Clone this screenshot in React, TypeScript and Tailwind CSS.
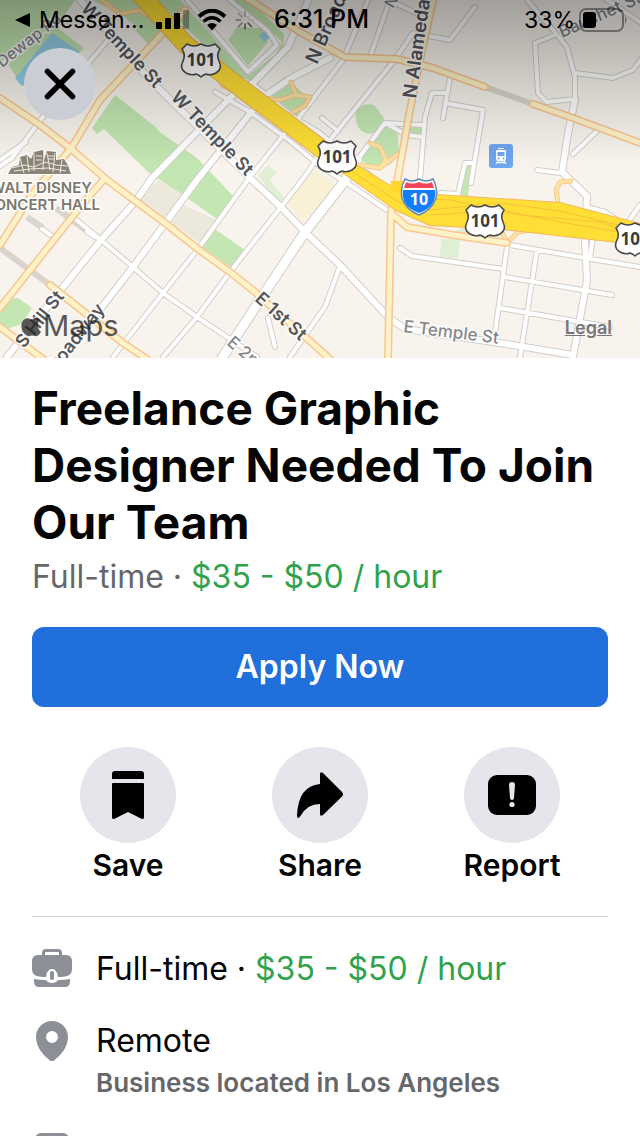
import React from 'react';

const parks = [
  'M0 0H75L60 22L20 48L0 62Z',
  'M8 64L55 26L84 48L70 62L22 86Z',
  'M92 0H150L160 30L148 36L118 12Z',
  'M135 30L152 20L163 34L150 46Z',
  'M157 0H180L248 76L276 54L282 42L262 22L232 0H250L284 34L283 52L254 82L228 72L205 46Z',
  'M228 40L237 27L262 28L268 42L248 66Z',
  'M268 92L284 77L312 100L297 117Z',
  'M115 95L157 128L158 131L197 158L235 198L217 219L190 200L148 172L104 129L97 134L92 128Z',
  'M213 228L245 250L232 268L202 247Z',
  'M0 312L10 299L18 298L32 308L22 324L0 331Z',
  'M356 112Q362 102 374 105L384 118Q380 132 370 134Q354 132 356 112Z',
  'M374 136L386 126L398 134L399 155L390 165L370 167L360 159L368 148Z',
  'M410 127L422 128V136L408 134Z',
  'M465 165L471 165L468 197L459 195Z',
];

const lightParks = [
  'M258 175L268 165L277 172L270 180L284 198L278 203Z',
  'M442 239H460L458 258H439Z',
  'M446 236L465 227L500 237L494 243Z',
];

const blocks = [
  'M158 180L190 198L165 218L140 200Z',
  'M183 205L217 220L200 243L172 223Z',
];

const tunnels = [
  'M0 248L50 285',
  'M27 217L43 228',
  'M56 208L87 231',
  'M485 87L533 104',
];

const streets = [
  // downtown grid
  'M257 357L227 337L197 317L163 293L133 267L101 240L73 217',
  'M87 232L101 240',
  'M42 229L52 236',
  'M285 133L250 177L198 249L163 293L113 357',
  'M320 155L302 180L281 207L230 272L197 317L163 357',
  'M268 318L275 347',
  'M340 266L325 307L290 357',
  'M0 166L12 158L42 118L108 40',
  'M0 160L26 142',
  // along the freeway
  'M215 92L250 112L290 141L320 166L350 185L390 212',
  'M253 84L293 117L320 133L360 168L384 186',
  'M187 0L248 72L277 45L268 31L230 0',
  // north side
  'M368 0L343 60L320 90L297 120',
  'M390 0L370 57',
  'M393 2L418 14',
  'M475 7L450 40L413 33L393 62L330 140L316 156',
  'M322 118L338 131',
  'M423 125L385 123L357 160',
  'M385 123L407 135L422 137',
  'M447 93H432L425 117L420 180',
  'M450 78L443 118',
  'M445 103L483 110L471 183',
  'M472 163H465L458 194L440 193',
  'M555 35L535 43L538 93L547 102L575 99',
  'M575 73L613 78L633 70L650 48',
  'M607 0L640 22',
  'M597 131L573 154',
  'M537 170L560 173',
  'M527 0L553 30L567 47L575 77V100',
  // arts district
  'M400 248L412 256L503 269',
  'M510 245L585 258L640 267',
  'M507 247L495 333',
  'M537 250L520 357',
  'M505 277L612 295',
  'M500 308L610 327',
  'M590 208L605 212L620 222',
  'M593 237L590 258',
  'M640 205L628 222',
];

const avenues = [
  'M80 0L150 80L250 178L281 207L305 232L340 265L388 317L405 329L500 343L573 355',
  'M310 -4L288 47L254 82L233 95L152 178L135 202L101 240L7 357',
  'M330 58L293 77L262 98L253 110L197 180L133 267L63 357',
  'M575 100L568 133L562 172L587 196L585 240L587 280L573 357',
];

const yellowRoads = [
  'M0 98L40 125L70 148L107 180L165 223L198 249L230 272L255 292L330 359',
  'M0 245L32 194L72 147L100 100L163 33L185 10',
  'M105 178L80 207L0 308',
  'M50 285L123 343L147 359',
  'M0 327L43 359',
  'M242 -5L300 32L345 57L397 59L433 68L485 87',
  'M533 104L573 118L640 143',
  'M434 -4L420 60L410 110L398 177L391 213L388 359',
  'M391 213L407 227L453 235L507 243',
];

const ramps = [
  'M262 98L280 100L296 95L291 82',
  'M296 95L310 97L305 106L293 112',
  'M360 165L380 168L386 160L380 147L370 143',
  'M380 168L390 160L398 154',
  'M102 0L120 14L140 10L160 24',
  'M240 85L232 90L222 85',
  'M507 243L503 234',
  'M507 243L518 232L530 230',
  'M558 203L556 190L560 182L571 181',
];

const mapLabels = [
  { text: 'W Temple St', x: 80, y: 9, angle: 47, size: 18, bold: true },
  { text: 'W Temple St', x: 170, y: 98, angle: 46, size: 18, bold: true },
  { text: 'Dewap Rd', x: 2, y: 68, angle: -38, size: 16, bold: false },
  { text: 'N Broadway', x: 317, y: 65, angle: -66, size: 19, bold: true },
  { text: 'N Alameda St', x: 416, y: 99, angle: -82, size: 19, bold: true },
  { text: 'N Main', x: 393, y: 9, angle: -60, size: 15, bold: false },
  { text: 'Bauchet St', x: 562, y: 38, angle: -24, size: 17, bold: false },
  { text: 'E 1st St', x: 254, y: 300, angle: 42, size: 18, bold: true },
  { text: 'E 2nd St', x: 226, y: 344, angle: 40, size: 17, bold: false },
  { text: 'E Temple St', x: 403, y: 332, angle: 7, size: 17, bold: false },
  { text: 'S Hill St', x: 24, y: 349, angle: -52, size: 18, bold: true },
  { text: 'Broadway', x: 52, y: 378, angle: -52, size: 18, bold: true },
];

const routeShields = [
  { x: 201, y: 60 },
  { x: 337, y: 157 },
  { x: 485, y: 221 },
  { x: 635, y: 239 },
];

const concertHall =
  'M8 174L12 167L19 165L20 157L27 155L31 159L34 152L43 150L44 160L47 151L56 152L56 160L64 159L68 165L71 174Z';

const freeway =
  'M334 146L356 165L400 192L437 195L560 203L640 224V246L617 242L503 229L430 225L396 210L345 174L318 154Z';

const MapView = () => (
  <svg className="block w-full" viewBox="0 0 640 358" role="img" aria-label="Map of Los Angeles">
    <defs>
      <linearGradient id="statusShade" x1="0" y1="0" x2="0" y2="1">
        <stop offset="0" stopColor="#000" stopOpacity="0.35" />
        <stop offset="0.5" stopColor="#000" stopOpacity="0.16" />
        <stop offset="1" stopColor="#000" stopOpacity="0" />
      </linearGradient>
    </defs>
    <rect width="640" height="358" fill="#f8f4ed" />

    {/* Land use */}
    <path d={parks.join('')} fill="#c3e6b2" />
    <path d={lightParks.join('')} fill="#deefd3" />
    <path d={blocks.join('')} fill="#ece8dc" />
    <path d="M314 170L339 187L302 222L286 200Z" fill="#faf0d6" />
    <path d="M52 33L80 52L22 86L15 78Z" fill="#94cfe6" />
    <path d="M259 35L266 31L270 38L264 42Z" fill="#94cfe6" />

    {/* Roads: casing first, then the fill */}
    <g fill="none" strokeLinecap="round" strokeLinejoin="round">
      <path d={tunnels.join('')} stroke="#d9d5cc" strokeWidth="6" strokeLinecap="butt" />
      <path d={streets.join('')} stroke="#d2cec9" strokeWidth="6" />
      <path d={avenues.join('')} stroke="#d2cec9" strokeWidth="8" />
      <path d="M357 160L344 182L305 232L260 300L222 358" stroke="#d2cec9" strokeWidth="11" />
      <path d={streets.join('')} stroke="#fff" strokeWidth="4" />
      <path d={avenues.join('')} stroke="#fff" strokeWidth="6" />
      <path d="M357 160L344 182L305 232L260 300L222 358" stroke="#fff" strokeWidth="9" />
      <path d={ramps.join('')} stroke="#f9c98c" strokeWidth="5" />
      <path d={ramps.join('')} stroke="#fde3a4" strokeWidth="3" />
      <path d={yellowRoads.join('')} stroke="#fac591" strokeWidth="8" />
      <path d={yellowRoads.join('')} stroke="#fef3c8" strokeWidth="5" />
      <path d="M140 -6L185 44L234 83L290 125L340 163" stroke="#edb258" strokeWidth="19" />
      <path d={freeway} stroke="#f3b95c" strokeWidth="2" />
      <path d="M140 -6L185 44L234 83L290 125L340 163" stroke="#ffdf35" strokeWidth="17" />
    </g>
    <path d={freeway} fill="#ffdf35" />
    <path d="M391 181L405 181L410 196L390 190Z" fill="#ffd52e" />
    <g fill="none" stroke="#f6c13b" strokeWidth="1">
      <path d="M350 170L398 202L430 210L500 203L560 211L640 230" />
      <path d="M400 198L450 200L520 215L600 222L640 236" />
      <path d="M430 215L500 210L560 222L620 232" />
    </g>

    {/* Street names */}
    {mapLabels.map(({ text, x, y, angle, size, bold }, index) => (
      <text
        key={index}
        transform={`translate(${x} ${y}) rotate(${angle})`}
        fontSize={size}
        fontWeight={bold ? 600 : 500}
        fill={bold ? '#55565a' : '#85868a'}
        stroke="#fff"
        strokeOpacity="0.8"
        strokeWidth="3"
        strokeLinejoin="round"
        paintOrder="stroke"
      >
        {text}
      </text>
    ))}

    {/* Concert hall */}
    <path d={concertHall} fill="#8b8577" stroke="#fff" strokeWidth="2" paintOrder="stroke" />
    <path
      d="M20 158L24 173M27 156L29 172M34 153V171M44 152L43 170M47 153L50 170M55 153L53 172M62 160L60 173M12 168L24 165L34 167L45 162L56 165L68 166M14 171L30 169L48 168L66 171M36 156H42M48 156H54M36 160H42M48 159H54"
      fill="none"
      stroke="#efece4"
      strokeWidth="1"
    />
    <g
      fontSize="15"
      fontWeight="600"
      fill="#7c776b"
      stroke="#fff"
      strokeWidth="3"
      strokeLinejoin="round"
      paintOrder="stroke"
      textAnchor="end"
    >
      <text x="92" y="193">WALT DISNEY</text>
      <text x="100" y="210">CONCERT HALL</text>
    </g>

    {/* Route shields */}
    {routeShields.map(({ x, y }) => (
      <g key={x} transform={`translate(${x} ${y})`}>
        <path
          d="M-14 -16Q-7 -12 0 -16Q7 -12 14 -16L19 -11Q15 -5 18 1Q22 9 15 13Q9 16 5 14Q2 15 0 17Q-2 15 -5 14Q-9 16 -15 13Q-22 9 -18 1Q-15 -5 -19 -11Z"
          fill="#fff"
          stroke="#4a4a4a"
          strokeWidth="1.6"
          strokeLinejoin="round"
        />
        <text y="6" textAnchor="middle" fontSize="17" fontWeight="700" fill="#3d3d3d" fontFamily="Open Sans">
          101
        </text>
      </g>
    ))}
    <g transform="translate(419 197)">
      <path
        d="M-14 -18Q-7 -14 0 -18Q7 -14 14 -18Q19 -9 17 1Q13 13 0 18Q-13 13 -17 1Q-19 -9 -14 -18Z"
        fill="#fff"
        stroke="#5f88b5"
        strokeWidth="1.5"
      />
      <path d="M-13 -15Q-7 -12 0 -15Q7 -12 13 -15L15 -9H-15Z" fill="#f5455c" />
      <path d="M-16 -7H16Q18 10 0 16Q-18 10 -16 -7Z" fill="#137cf8" />
      <text y="8" textAnchor="middle" fontSize="16" fontWeight="700" fill="#fff" fontFamily="Open Sans">
        10
      </text>
    </g>

    {/* Train station */}
    <g transform="translate(489 144)">
      <rect width="24" height="24" rx="3" fill="#6ea5ef" />
      <path d="M9 4H15V5H9ZM8 6H16Q17 6 17 7V15Q17 17 15 17H9Q7 17 7 15V7Q7 6 8 6Z" fill="#fff" />
      <path d="M8.500 8H15.500V12H8.500Z" fill="#6ea5ef" />
      <circle cx="9.500" cy="14.500" r="1" fill="#6ea5ef" />
      <circle cx="14.500" cy="14.500" r="1" fill="#6ea5ef" />
      <path d="M9 17L7 20M15 17L17 20M8 18.500H16" stroke="#fff" strokeWidth="1.300" />
    </g>

    <rect width="640" height="165" fill="url(#statusShade)" />

    {/* Attribution */}
    <g opacity="0.75">
      <path
        d="M32 320C34 317 38 317 40 320Q37 323 38 327Q39 331 41 332Q38 337 35 336Q32 335 29 336Q25 336 22 330Q20 322 25 319Q28 317 32 320Z"
        fill="#222"
      />
      <text x="43" y="336" fontSize="29" fill="#222">
        Maps
      </text>
    </g>
  </svg>
);

const StatusBar = () => (
  <div className="absolute inset-x-0 top-0 grid h-10 grid-cols-[1fr_auto_1fr] items-center pl-[15px] pr-3 text-[23px] text-black">
    <div className="flex items-center">
      <svg className="mr-2 h-4 w-4" viewBox="0 0 16 16" aria-hidden="true">
        <path d="M0 8L15 1V15Z" />
      </svg>
      <span>Messen...</span>
      <svg className="ml-3 h-5 w-[33px]" viewBox="0 0 33 20" aria-hidden="true">
        <rect x="0" y="12" width="6" height="7" rx="1" />
        <rect x="9" y="8" width="6" height="11" rx="1" />
        <rect x="18" y="3" width="6" height="16" rx="1" />
        <rect x="27" y="0" width="6" height="19" rx="1" opacity="0.3" />
      </svg>
      <svg className="ml-2 h-[22px] w-[30px]" viewBox="0 0 30 22" fill="none" aria-hidden="true">
        <path d="M2 7.500Q15 -4 28 7.500" stroke="#000" strokeWidth="4" />
        <path d="M6.500 12.500Q15 5 23.500 12.500" stroke="#000" strokeWidth="3.500" />
        <path d="M10 16Q15 12 20 16L15 21.500Z" fill="#000" />
      </svg>
      <svg className="ml-2 h-5 w-5" viewBox="0 0 20 20" fill="none" strokeWidth="1.5" strokeLinecap="round" aria-hidden="true">
        <path d="M10 1V6" stroke="#777" />
        <path d="M16.500 3.500L13 7M14.500 10H19" stroke="#999" />
        <path d="M13 13L16.500 16.500M10 14V19" stroke="#444" />
        <path d="M7 13L3.500 16.500M1 10H5.500" stroke="#666" />
        <path d="M3.500 3.500L7 7" stroke="#777" />
      </svg>
    </div>
    <span className="text-[25px] font-medium">6:31 PM</span>
    <div className="flex items-center justify-end">
      <span>33%</span>
      <svg className="ml-1 h-6 w-[49px]" viewBox="0 0 49 24" aria-hidden="true">
        <rect x="1" y="1" width="43" height="22" rx="6" fill="none" stroke="#000" strokeOpacity="0.4" strokeWidth="2" />
        <rect x="4" y="4" width="13" height="16" rx="3" />
        <path d="M46 8Q49 12 46 16Z" opacity="0.4" />
      </svg>
    </div>
  </div>
);

const SaveIcon = () => (
  <svg className="h-12 w-12" viewBox="0 0 48 48" aria-hidden="true">
    <path d="M11 0H37Q40 0 40 3V8H8V3Q8 0 11 0Z" />
    <path d="M9 12H39Q40 12 40 13V46Q40 49 37 47.500L24 41L11 47.500Q8 49 8 46V13Q8 12 9 12Z" />
  </svg>
);

const ShareIcon = () => (
  <svg className="h-12 w-12" viewBox="0 0 48 48" aria-hidden="true">
    <path d="M24 13V3.500Q24 0 27 2L46 21Q48 23.500 46 25.500L27 44Q24 46 24 43V33Q11 33 4.500 45Q1 49 1 44.500Q2 15 24 13Z" />
  </svg>
);

const ReportIcon = () => (
  <svg className="h-12 w-12" viewBox="0 0 48 48" aria-hidden="true">
    <rect x="0" y="4" width="48" height="40" rx="9" />
    <path d="M21 14Q21 11 24 11Q27 11 27 14L26 27Q26 29 24 29Q22 29 22 27Z" fill="#e4e6eb" />
    <circle cx="24" cy="33.500" r="2.600" fill="#e4e6eb" />
  </svg>
);

const actions = [
  { label: 'Save', icon: <SaveIcon /> },
  { label: 'Share', icon: <ShareIcon /> },
  { label: 'Report', icon: <ReportIcon /> },
];

const BriefcaseIcon = () => (
  <svg className="h-10 w-10 shrink-0" viewBox="0 0 40 40" fill="#8c9096" aria-hidden="true">
    <path d="M11.500 7V4Q11.500 1.500 14 1.500H26Q28.500 1.500 28.500 4V7" fill="none" stroke="#8c9096" strokeWidth="3" />
    <path d="M6 6H34Q40 6 40 12V20Q40 27 33 27.500Q29 28 26 28Q25 20 20 20Q15 20 14 28Q11 28 7 27.500Q0 27 0 20V12Q0 6 6 6Z" />
    <path d="M2 30Q7 31 14 31Q16 34 20 34Q24 34 26 31Q33 31 38 30V32Q38 38 33 38H7Q2 38 2 32Z" />
    <rect x="18" y="22" width="4" height="9" rx="2" />
  </svg>
);

const PinIcon = () => (
  <svg className="h-10 w-10 shrink-0" viewBox="0 0 40 40" aria-hidden="true">
    <path
      fillRule="evenodd"
      d="M20 0C29 0 36 7 36 16C36 26 29 34 22 39.500Q20 41 18 39.500C11 34 4 26 4 16C4 7 11 0 20 0ZM20 10A6 6 0 1 0 20 22A6 6 0 1 0 20 10Z"
      fill="#8c9096"
    />
  </svg>
);

const CardIcon = () => (
  <svg className="h-10 w-10 shrink-0" viewBox="0 0 40 40" aria-hidden="true">
    <rect x="3" y="0" width="34" height="40" rx="6" fill="#8c9096" />
  </svg>
);

export default function App() {
  return (
    <main className="h-screen overflow-hidden bg-white font-['Inter','Liberation_Sans',sans-serif] text-[#050505]">
      <header className="relative">
        <MapView />
        <StatusBar />
        <button
          type="button"
          aria-label="Close"
          className="absolute left-6 top-12 flex h-[72px] w-[72px] items-center justify-center rounded-full bg-[#caced4]"
        >
          <svg className="h-8 w-8" viewBox="0 0 32 32" aria-hidden="true">
            <path d="M3.500 3.500L28.500 28.500M28.500 3.500L3.500 28.500" stroke="#000" strokeWidth="5.5" strokeLinecap="round" />
          </svg>
        </button>
        <a href="#" className="absolute bottom-4 right-7 text-lg font-semibold text-[#77767a] underline">
          Legal
        </a>
      </header>

      <section className="px-8 pt-[22px]">
        <h1 className="text-[46px] font-bold leading-[57px]">
          Freelance Graphic Designer Needed To Join Our Team
        </h1>
        <p className="mt-1.5 text-[32px] leading-10 text-[#65676b]">
          Full-time · <span className="text-[#31a24c]">$35 - $50 / hour</span>
        </p>

        <button
          type="button"
          className="mt-[30px] h-20 w-full rounded-xl bg-[#216fdb] text-[32px] font-semibold text-white"
        >
          Apply Now
        </button>

        {/* Actions */}
        <div className="mt-10 grid grid-cols-3 border-b border-[#ced0d4] pb-[33px]">
          {actions.map(({ label, icon }) => (
            <button key={label} type="button" className="flex flex-col items-center gap-1">
              <span className="flex h-24 w-24 items-center justify-center rounded-full bg-[#e4e6eb]">{icon}</span>
              <span className="text-[30px] font-semibold leading-9">{label}</span>
            </button>
          ))}
        </div>
      </section>

      {/* Job details */}
      <ul className="flex flex-col gap-8 px-8 pt-8 text-[32px] leading-10">
        <li className="flex gap-6">
          <BriefcaseIcon />
          <p>
            Full-time · <span className="text-[#31a24c]">$35 - $50 / hour</span>
          </p>
        </li>
        <li className="flex gap-6">
          <PinIcon />
          <div>
            <p>Remote</p>
            <p className="mt-1 text-[26px] font-semibold leading-9 text-[#65676b]">Business located in Los Angeles</p>
          </div>
        </li>
        <li className="flex gap-6">
          <CardIcon />
        </li>
      </ul>
    </main>
  );
}
